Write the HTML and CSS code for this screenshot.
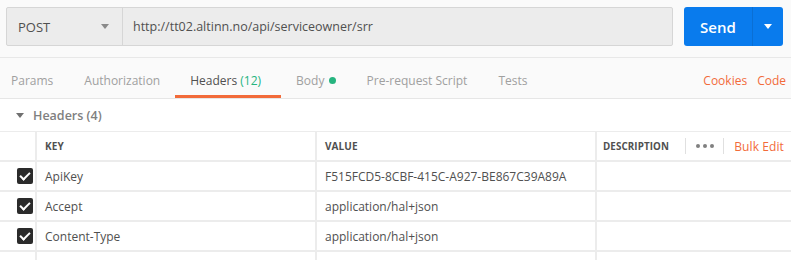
FILE: index.html
```html
<!DOCTYPE html>
<html>
<head>
<meta charset="utf-8">
<link rel="stylesheet" href="styles.css">
</head>
<body>
<div class="topbar">
  <div class="request">
    <div class="method"><span>POST</span><span class="caret"></span></div>
    <div class="url">http://tt02.altinn.no/api/serviceowner/srr</div>
  </div>
  <div class="send">
    <span class="send-label">Send</span>
    <span class="send-drop"><span class="caret white"></span></span>
  </div>
</div>
<div class="tabbar">
  <div class="tabs">
    <span class="tab first">Params</span>
    <span class="tab">Authorization</span>
    <span class="tab active">Headers <span class="count">(12)</span></span>
    <span class="tab body-tab">Body <span class="dot"></span></span>
    <span class="tab">Pre-request Script</span>
    <span class="tab">Tests</span>
  </div>
  <div class="links">
    <span class="link">Cookies</span>
    <span class="link">Code</span>
  </div>
</div>
<div class="section">
  <span class="caret dark"></span><span class="section-title">Headers (4)</span>
</div>
<div class="table">
  <div class="cell"></div>
  <div class="cell th">KEY</div>
  <div class="cell th">VALUE</div>
  <div class="cell th desc">
    <span>DESCRIPTION</span>
    <span class="tools"><span class="sep"></span><span class="dots"><i></i><i></i><i></i></span><span class="sep"></span><span class="bulk">Bulk Edit</span></span>
  </div>

  <div class="cell chk"><span class="checkbox"></span></div>
  <div class="cell">ApiKey</div>
  <div class="cell">F515FCD5-8CBF-415C-A927-BE867C39A89A</div>
  <div class="cell"></div>

  <div class="cell chk"><span class="checkbox"></span></div>
  <div class="cell">Accept</div>
  <div class="cell">application/hal+json</div>
  <div class="cell"></div>

  <div class="cell chk"><span class="checkbox"></span></div>
  <div class="cell">Content-Type</div>
  <div class="cell">application/hal+json</div>
  <div class="cell"></div>

  <div class="cell"></div>
  <div class="cell"></div>
  <div class="cell"></div>
  <div class="cell"></div>
</div>
</body>
</html>
```
FILE: styles.css
```css
* { box-sizing: border-box; }
html { overflow: hidden; }
body {
  margin: 0;
  background: #fff;
  font-family: "Open Sans", "Noto Sans", sans-serif;
  color: #505050;
  width: 791px;
  height: 260px;
  overflow: hidden;
}
.topbar {
  display: flex;
  background: #fafafa;
  padding: 7px 8px 0 6px;
  height: 58px;
  border-bottom: 1px solid #e8e8e8;
}
.request {
  flex: 1;
  display: flex;
  height: 39px;
  background: #ececec;
  border: 1px solid #d6d6d6;
  border-radius: 2px;
}
.method {
  width: 116px;
  display: flex;
  align-items: center;
  justify-content: space-between;
  padding: 0 13px 0 11px;
  border-right: 1px solid #d6d6d6;
  font-size: 13px;
  color: #505050;
}
.url {
  display: flex;
  align-items: center;
  padding-left: 10px;
  font-size: 12.5px;
  color: #505050;
}
.caret {
  display: inline-block;
  width: 0;
  height: 0;
  border-left: 4px solid transparent;
  border-right: 4px solid transparent;
  border-top: 5px solid #8a8a8a;
}
.caret.white { border-top-color: #fff; }
.caret.dark { border-top-color: #707070; }
.send {
  margin-left: 11px;
  width: 99px;
  height: 39px;
  background: #097bed;
  border-radius: 3px;
  display: flex;
  color: #fff;
}
.send-label {
  width: 69px;
  display: flex;
  align-items: center;
  justify-content: center;
  font-size: 15px;
  font-weight: 600;
  border-right: 1px solid #0a6fd4;
}
.send-drop {
  flex: 1;
  display: flex;
  align-items: center;
  justify-content: center;
}
.tabbar {
  display: flex;
  justify-content: space-between;
  background: #fafafa;
  height: 41px;
  border-bottom: 1px solid #e6e6e6;
}
.tabs { display: flex; }
.tab {
  display: flex;
  align-items: center;
  padding: 7px 15px 0 16px;
  font-size: 12px;
  color: #a0a0a0;
  border-bottom: 3px solid transparent;
  white-space: pre;
}
.tab.first { padding-left: 11px; }
.tab.active {
  color: #505050;
  border-bottom-color: #f26b3a;
  padding: 7px 20px 0 15px;
}
.tab.body-tab { padding-left: 15px; }
.count { color: #26b47f; }
.dot {
  display: inline-block;
  width: 7px;
  height: 7px;
  border-radius: 50%;
  background: #26b47f;
  margin-left: 1px;
}
.links {
  display: flex;
  align-items: center;
  gap: 10px;
  padding: 7px 5px 0 0;
  margin-bottom: 3px;
}
.link { font-size: 12px; color: #f26b3a; }
.section {
  height: 32px;
  display: flex;
  align-items: center;
  padding-left: 16px;
}
.section .caret { margin-right: 9px; }
.section-title {
  font-size: 12.5px;
  font-weight: 600;
  color: #808080;
}
.table {
  display: grid;
  grid-template-columns: 35px 278px 278px 1fr;
  grid-auto-rows: 28px;
  gap: 2px;
  background: #ececec;
  padding-top: 1px;
}
.cell {
  background: #fff;
  display: flex;
  align-items: center;
  padding-left: 8px;
  font-size: 12px;
  color: #505050;
}
.th {
  font-size: 10px;
  font-weight: 700;
  color: #505050;
  letter-spacing: 0.1px;
}
.desc {
  padding-left: 6px;
  justify-content: space-between;
  font-size: 9.8px;
}
.tools {
  display: flex;
  align-items: center;
  height: 100%;
}
.sep {
  width: 1px;
  height: 16px;
  background: #e0e0e0;
}
.dots {
  display: flex;
  gap: 3px;
  padding: 0 9px 0 10px;
}
.dots i {
  display: block;
  width: 4px;
  height: 4px;
  border-radius: 50%;
  background: #808080;
}
.bulk {
  font-size: 12px;
  font-weight: 400;
  color: #f26b3a;
  padding: 0 7px 0 10px;
}
.chk { padding-left: 17px; }
.checkbox {
  width: 16px;
  height: 16px;
  border-radius: 2px;
  background: #2b2b2b;
  position: relative;
}
.checkbox::after {
  content: "";
  position: absolute;
  left: 5px;
  top: 2px;
  width: 4px;
  height: 8px;
  border-right: 2px solid #fff;
  border-bottom: 2px solid #fff;
  transform: rotate(45deg);
}
```
